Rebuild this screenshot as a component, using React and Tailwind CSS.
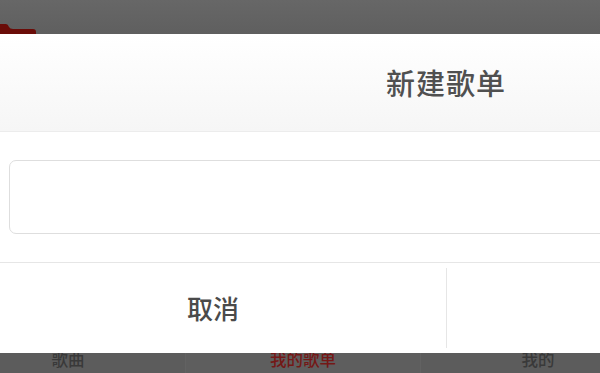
import React from "react";

const tabs = [
  { id: 1, title: "歌曲", active: false },
  { id: 2, title: "我的歌单", active: true },
  { id: 3, title: "我的", active: false },
];

const App = () => {
  return (
    <div
      className="w-[600px] h-[373px] overflow-hidden bg-[#666666] flex flex-col"
      style={{ fontFamily: '"Noto Sans CJK SC", "Noto Sans", sans-serif' }}
    >
      {/* dimmed app header behind the dialog */}
      <div className="h-[34px] shrink-0 relative bg-gradient-to-b from-[#676767] to-[#5f5f5f]">
        <svg className="absolute left-0 bottom-0" width="40" height="12" viewBox="0 0 40 12">
          <path d="M0 2 L6 2 Q8 2 9 5 Q10 7 13 7 L33 7 Q36 7 36 10 L36 12 L0 12 Z" fill="#6a0c08" />
        </svg>
      </div>

      {/* dialog */}
      <div className="w-[932px] ml-[-20px] h-[319px] shrink-0 bg-white flex flex-col">
        <div className="h-[98px] border-b border-[#ececec] bg-gradient-to-b from-white to-[#f6f6f6] flex items-center justify-center">
          <span className="text-[29px] text-[#505050] font-medium tracking-[1px]">新建歌单</span>
        </div>
        <div className="h-[131px] px-[29px] pt-[28px] border-b border-[#e6e6e6]">
          <div className="h-[74px] rounded-[7px] border border-[#dedede] bg-white"></div>
        </div>
        <div className="flex-1 flex">
          <button className="w-1/2 flex items-center justify-center pb-[2px] text-[26px] text-[#4a4a4a] font-medium">
            取消
          </button>
          <div className="w-px bg-[#e6e6e6] my-[5px]"></div>
          <button className="flex-1"></button>
        </div>
      </div>

      {/* dimmed tab bar */}
      <div className="flex-1 w-[705px] ml-[-50px] flex bg-[#5c5c5c] overflow-hidden">
        {tabs.map((tab) => (
          <div
            key={tab.id}
            className={
              "flex-1 flex justify-center border-l border-[#626262] " +
              (tab.active ? "bg-[#5e5e5e]" : "")
            }
          >
            <span
              className={
                "text-[16.5px] leading-[20px] mt-[-4px] font-medium " +
                (tab.active ? "text-[#741816]" : "text-[#393939]")
              }
            >
              {tab.title}
            </span>
          </div>
        ))}
      </div>
    </div>
  );
};

export default App;
